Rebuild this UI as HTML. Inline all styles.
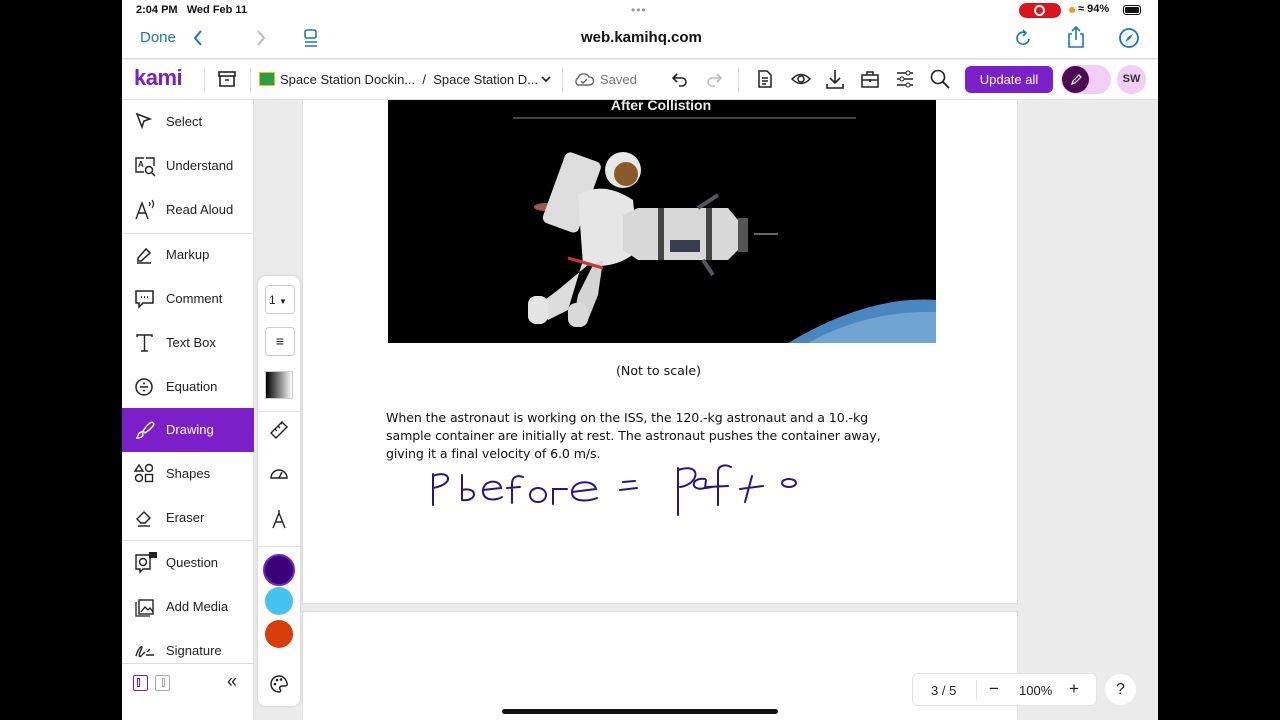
<!DOCTYPE html>
<html><head><meta charset="utf-8"><style>
*{margin:0;padding:0;box-sizing:border-box}
body{width:1280px;height:720px;background:#000;position:relative;overflow:hidden;font-family:"Liberation Sans",sans-serif;color:#222}
.a{position:absolute}
.ipad{left:122px;top:0;width:1036px;height:720px;background:#ebebeb;overflow:hidden}
.side{left:0;top:100px;width:132px;height:620px;background:#fff;border-right:1px solid #ddd}
.it{position:absolute;left:0;width:132px;height:44px;font-size:13px;color:#222}
.it span{position:absolute;left:44px;top:14px}
.it svg{position:absolute;left:12px;top:11px}
.sel{background:#7b1fc9;color:#fff}
.tb{font-size:13px}
</style></head><body>
<div class="a ipad">
 <div class="a" style="left:0;top:0;width:1036px;height:59px;background:#fff;border-bottom:1px solid #ddd"></div>
 <div class="a" style="left:14px;top:4px;font-size:11px;font-weight:bold;color:#111">2:04 PM&nbsp;&nbsp; Wed Feb 11</div>
 <div class="a" style="left:509px;top:3px;font-size:12px;color:#999;letter-spacing:1px">•••</div>
 <div class="a" style="left:897px;top:3px;width:42px;height:15px;border-radius:8px;background:#d9141c"></div>
 <div class="a" style="left:912px;top:5px;width:11px;height:11px;border-radius:50%;border:2px solid #fff"></div>
 <div class="a" style="left:947px;top:7px;width:6px;height:6px;border-radius:50%;background:#f39a1d"></div>
 <div class="a" style="left:956px;top:3px;font-size:11px;font-weight:bold;color:#111">&#8776; 94%</div>
 <div class="a" style="left:1001px;top:5px;width:18px;height:10px;border:1px solid #111;border-radius:3px;padding:1px"><div style="width:100%;height:100%;background:#111;border-radius:1px"></div></div>
 <div class="a" style="left:18px;top:29px;font-size:15px;color:#1a74c9">Done</div>
 <svg class="a" style="left:70px;top:29px" width="12" height="18"><path d="M9 2 L3 9 L9 16" stroke="#1a74c9" stroke-width="2" fill="none"/></svg>
 <svg class="a" style="left:133px;top:29px" width="12" height="18"><path d="M3 2 L9 9 L3 16" stroke="#bbb" stroke-width="2" fill="none"/></svg>
 <svg class="a" style="left:180px;top:28px" width="18" height="20"><rect x="3" y="2" width="11" height="8" rx="2" stroke="#1a74c9" stroke-width="1.6" fill="none"/><path d="M3 14h12M3 18h12" stroke="#1a74c9" stroke-width="1.6"/></svg>
 <div class="a" style="left:459px;top:29px;font-size:15px;font-weight:bold;color:#111">web.kamihq.com</div>
 <svg class="a" style="left:893px;top:28px" width="18" height="20"><path d="M14 11 A6 6 0 1 1 11 5" stroke="#1a74c9" stroke-width="1.6" fill="none"/><path d="M8 2 L11 5 L8 8" stroke="#1a74c9" stroke-width="1.6" fill="none"/></svg>
 <svg class="a" style="left:944px;top:25px" width="20" height="24"><path d="M6 9H3v13h14V9h-3M10 15V2M6 6l4-4 4 4" stroke="#1a74c9" stroke-width="1.6" fill="none"/></svg>
 <svg class="a" style="left:996px;top:27px" width="22" height="22"><circle cx="11" cy="11" r="9" stroke="#1a74c9" stroke-width="1.8" fill="none"/><path d="M15 7 L12 12 L7 15 L10 10Z" fill="#1a74c9"/></svg>
 <div class="a" style="left:0;top:60px;width:1036px;height:40px;background:#fff;border-bottom:1px solid #e2e2e2"></div>
 <div class="a" style="left:12px;top:65px;font-size:22px;font-weight:bold;color:#7b1fc9;letter-spacing:-0.5px">kami</div>
 <div class="a" style="left:82px;top:68px;width:1px;height:24px;background:#ddd"></div>
 <svg class="a" style="left:95px;top:70px" width="20" height="18"><rect x="2" y="2" width="16" height="4" stroke="#222" stroke-width="1.6" fill="none"/><path d="M3 6v10h14V6M8 10h4" stroke="#222" stroke-width="1.6" fill="none"/></svg>
 <div class="a" style="left:128px;top:68px;width:1px;height:24px;background:#ddd"></div>
 <div class="a" style="left:137px;top:72px;width:16px;height:14px;background:#2a9d46;border:1px solid #e6c21d"></div>
 <div class="a tb" style="left:158px;top:72px">Space Station Dockin...&nbsp; /&nbsp; Space Station D...</div>
 <svg class="a" style="left:418px;top:74px" width="12" height="10"><path d="M2 3l4 4 4-4" stroke="#222" stroke-width="1.6" fill="none"/></svg>
 <div class="a" style="left:440px;top:68px;width:1px;height:24px;background:#ddd"></div>
 <svg class="a" style="left:451px;top:70px" width="22" height="18"><path d="M5 15 A4 4 0 0 1 5 8 A6 6 0 0 1 16 7 A4 4 0 0 1 17 15Z" stroke="#666" stroke-width="1.4" fill="none"/><path d="M8 11l2 2 4-4" stroke="#666" stroke-width="1.4" fill="none"/></svg>
 <div class="a tb" style="left:478px;top:72px;color:#777">Saved</div>
 <svg class="a" style="left:548px;top:70px" width="18" height="18"><path d="M4 8h8a4 4 0 0 1 0 8H9M7 4L3 8l4 4" stroke="#222" stroke-width="1.6" fill="none"/></svg>
 <svg class="a" style="left:584px;top:70px" width="18" height="18"><path d="M14 8H6a4 4 0 0 0 0 8h3M11 4l4 4-4 4" stroke="#bbb" stroke-width="1.6" fill="none"/></svg>
 <div class="a" style="left:616px;top:68px;width:1px;height:24px;background:#ddd"></div>
 <svg class="a" style="left:634px;top:69px" width="18" height="20"><path d="M3 2h8l4 4v12H3z M6 9h6M6 12h6M6 15h4" stroke="#222" stroke-width="1.5" fill="none"/></svg>
 <svg class="a" style="left:668px;top:70px" width="22" height="18"><path d="M2 9 Q11 0 20 9 Q11 18 2 9Z" stroke="#222" stroke-width="1.5" fill="none"/><circle cx="11" cy="9" r="3" stroke="#222" stroke-width="1.5" fill="none"/></svg>
 <svg class="a" style="left:703px;top:68px" width="20" height="22"><path d="M10 2v13M5 10l5 5 5-5M2 16v4h16v-4" stroke="#222" stroke-width="1.6" fill="none"/></svg>
 <svg class="a" style="left:738px;top:69px" width="20" height="20"><rect x="2" y="6" width="16" height="12" stroke="#222" stroke-width="1.5" fill="none"/><path d="M7 6V3h6v3M2 11h16M10 10v3" stroke="#222" stroke-width="1.5" fill="none"/></svg>
 <svg class="a" style="left:773px;top:69px" width="20" height="20"><path d="M2 4h16M2 10h16M2 16h16" stroke="#222" stroke-width="1.4"/><circle cx="13" cy="4" r="2" fill="#fff" stroke="#222"/><circle cx="7" cy="10" r="2" fill="#fff" stroke="#222"/><circle cx="13" cy="16" r="2" fill="#fff" stroke="#222"/></svg>
 <svg class="a" style="left:808px;top:69px" width="20" height="20"><circle cx="8" cy="8" r="6.5" stroke="#222" stroke-width="1.6" fill="none"/><path d="M13 13l6 6" stroke="#222" stroke-width="1.8"/></svg>
 <div class="a" style="left:843px;top:66px;width:88px;height:27px;border-radius:6px;background:#7b1fc9;color:#fff;font-size:13px;text-align:center;line-height:27px">Update all</div>
 <div class="a" style="left:939px;top:65px;width:50px;height:29px;border-radius:15px;background:#f2cdf5"></div>
 <div class="a" style="left:940px;top:66px;width:27px;height:27px;border-radius:50%;background:#4d0b52"></div>
 <svg class="a" style="left:947px;top:73px" width="14" height="14"><path d="M3 11l1-3 6-6 2 2-6 6z" stroke="#fff" stroke-width="1.2" fill="none"/></svg>
 <div class="a" style="left:995px;top:65px;width:29px;height:29px;border-radius:50%;background:#f2cdf5;font-size:11px;font-weight:bold;text-align:center;line-height:29px;color:#333">SW</div>

 <div class="a" style="left:180px;top:100px;width:716px;height:504px;background:#fff;border:1px solid #ddd;border-top:none"></div>
 <div class="a" style="left:180px;top:611px;width:716px;height:120px;background:#fff;border:1px solid #ddd"></div>
 <svg class="a" style="left:266px;top:100px" width="548" height="243" viewBox="0 0 548 243">
  <rect width="548" height="243" fill="#000"/>
  <text x="273" y="10" text-anchor="middle" fill="#eee" font-size="14" font-weight="bold" font-family="Liberation Sans">After Collistion</text>
  <line x1="125" y1="18" x2="468" y2="18" stroke="#888"/>
  <path d="M400 243 Q480 195 548 200 L548 243Z" fill="#4a86c0"/>
  <path d="M420 243 Q480 210 548 212 L548 243Z" fill="#8ab9e0" opacity=".6"/>
  <ellipse cx="158" cy="107" rx="12" ry="4" fill="#e07a6a" opacity=".7"/>
  <rect x="165" y="55" width="38" height="75" rx="6" fill="#ddd" transform="rotate(20 184 92)"/>
  <circle cx="235" cy="70" r="18" fill="#e8e8e8"/>
  <circle cx="238" cy="74" r="12" fill="#8a5a28"/>
  <path d="M190 95 Q215 80 245 100 L250 150 Q230 170 195 165Z" fill="#e6e6e6"/>
  <path d="M195 160 L180 210 L160 220 L150 205 L170 190 L200 165Z" fill="#dcdcdc"/>
  <path d="M215 160 L210 195 L200 220 L185 220 L190 195 L205 165Z" fill="#d4d4d4"/>
  <rect x="140" y="196" width="20" height="28" rx="8" fill="#e5e5e5"/>
  <rect x="180" y="203" width="20" height="24" rx="8" fill="#dadada"/>
  <line x1="180" y1="158" x2="215" y2="168" stroke="#c33" stroke-width="3"/>
  <path d="M235 115 L250 108 L340 108 L350 120 L350 150 L340 160 L250 160 L235 150Z" fill="#d8d8d8"/>
  <rect x="270" y="108" width="6" height="52" fill="#444"/><rect x="318" y="108" width="6" height="52" fill="#444"/>
  <rect x="282" y="140" width="30" height="12" fill="#3a3d4d"/>
  <rect x="350" y="118" width="10" height="34" fill="#555"/>
  <line x1="310" y1="108" x2="330" y2="95" stroke="#556" stroke-width="4"/><line x1="315" y1="160" x2="325" y2="175" stroke="#556" stroke-width="4"/>
  <line x1="366" y1="134" x2="390" y2="134" stroke="#ccc"/>
 </svg>
 <div class="a" style="left:494px;top:363px;font-family:'DejaVu Sans',sans-serif;font-size:12.6px;color:#111">(Not to scale)</div>
 <div class="a" style="left:264px;top:409px;width:520px;font-family:'DejaVu Sans',sans-serif;font-size:12.6px;line-height:18px;color:#111;letter-spacing:-0.1px">When the astronaut is working on the ISS, the 120.-kg astronaut and a 10.-kg sample container are initially at rest. The astronaut pushes the container away, giving it a final velocity of 6.0 m/s.</div>
 <svg class="a" style="left:-122px;top:0" width="1280" height="720"><g stroke="#2a1480" stroke-width="2" fill="none" stroke-linecap="round">
  <path d="M433 505 L433 474 M433 476 C450 469 456 484 433 488"/>
  <path d="M462 475 L462 500 M462 490 C478 486 478 502 462 500"/>
  <path d="M483 490 L501 488 C500 478 482 480 483 492 C484 502 498 500 502 497"/>
  <path d="M512 503 L512 484 C512 476 518 475 523 477 M507 488 L520 487"/>
  <ellipse cx="538" cy="495" rx="8" ry="7"/>
  <path d="M553 504 L553 489 L567 489"/>
  <path d="M572 492 L596 489 C594 479 571 480 572 493 C573 503 590 501 597 498"/>
  <path d="M620 490 L637 488 M623 482 L635 481"/>
  <path d="M678 515 L678 468 M678 470 C702 462 700 484 680 487"/>
  <path d="M705 479 C690 477 690 492 705 488 L706 480 M706 488 L712 487"/>
  <path d="M718 505 L718 472 C718 465 726 464 731 467 M707 487 L728 486"/>
  <path d="M752 476 L745 502 M740 489 L763 486"/>
  <ellipse cx="789" cy="483" rx="7" ry="4"/>
 </g></svg>
 <div class="a" style="left:790px;top:673px;width:185px;height:33px;background:#fff;border-radius:6px;border:1px solid #e4e4e4;font-size:13px;color:#222">
  <span class="a" style="left:18px;top:9px">3 / 5</span>
  <div class="a" style="left:63px;top:6px;width:1px;height:20px;background:#e0e0e0"></div>
  <span class="a" style="left:76px;top:5px;font-size:17px">&minus;</span>
  <span class="a" style="left:106px;top:9px">100%</span>
  <span class="a" style="left:156px;top:5px;font-size:17px">+</span>
 </div>
 <div class="a" style="left:983px;top:674px;width:31px;height:31px;border-radius:50%;background:#fff;text-align:center;line-height:31px;font-size:16px">?</div>

 <div class="a side">
  <div class="it" style="top:0"><svg width="20" height="20"><path d="M3 3l13 5-6 2-2 6z" stroke="#222" stroke-width="1.5" fill="none"/></svg><span>Select</span></div>
  <div class="it" style="top:44px"><svg width="22" height="22"><path d="M10 3H2v14h8M12 3h8v8" stroke="#222" stroke-width="1.4" fill="none"/><text x="4" y="12" font-size="8" font-weight="bold" fill="#222">A</text><circle cx="15" cy="15" r="3.5" stroke="#222" stroke-width="1.5" fill="none"/><path d="M18 18l3 3" stroke="#222" stroke-width="1.5"/></svg><span>Understand</span></div>
  <div class="it" style="top:88px"><svg width="22" height="22"><path d="M2 20L8 4L14 20M4.5 14h7" stroke="#222" stroke-width="1.4" fill="none"/><path d="M15 3q2 2 0 4M18 1q3 4 0 8" stroke="#222" stroke-width="1.2" fill="none"/></svg><span>Read Aloud</span></div>
  <div style="position:absolute;left:0;top:133px;width:132px;height:1px;background:#e2e2e2"></div>
  <div class="it" style="top:133px"><svg width="22" height="22"><path d="M4 14l8-9 4 4-9 8H4z" stroke="#222" stroke-width="1.5" fill="none"/><path d="M3 19h14" stroke="#222" stroke-width="1.5"/></svg><span>Markup</span></div>
  <div class="it" style="top:177px"><svg width="22" height="22"><path d="M2 3h17v12H9l-4 4v-4H2z" stroke="#222" stroke-width="1.5" fill="none"/><path d="M7 9h1M10 9h1M13 9h1" stroke="#222" stroke-width="1.8"/></svg><span>Comment</span></div>
  <div class="it" style="top:221px"><svg width="22" height="22"><path d="M3 5V3h15v2M10.5 3v16M7 19h7" stroke="#222" stroke-width="1.4" fill="none"/></svg><span>Text Box</span></div>
  <div class="it" style="top:265px"><svg width="22" height="22"><circle cx="10" cy="11" r="8" stroke="#222" stroke-width="1.5" fill="none"/><path d="M6 11h8" stroke="#222" stroke-width="1.5"/><circle cx="10" cy="7.5" r="1" fill="#222"/><circle cx="10" cy="14.5" r="1" fill="#222"/></svg><span>Equation</span></div>
  <div class="it sel" style="top:308px"><svg width="22" height="22"><path d="M18 3c-3 1-7 6-9 9l2 2c3-2 8-6 9-9zM8 13c-3 0-4 3-5 6 3 0 6-1 6-4z" stroke="#fff" stroke-width="1.4" fill="none"/></svg><span>Drawing</span></div>
  <div class="it" style="top:352px"><svg width="22" height="22"><path d="M5 2l4 6H1z" stroke="#222" stroke-width="1.4" fill="none"/><circle cx="15" cy="5" r="3.5" stroke="#222" stroke-width="1.4" fill="none"/><circle cx="5" cy="15" r="3.5" stroke="#222" stroke-width="1.4" fill="none"/><rect x="11.5" y="11.5" width="7" height="7" stroke="#222" stroke-width="1.4" fill="none"/></svg><span>Shapes</span></div>
  <div class="it" style="top:396px"><svg width="22" height="22"><path d="M3 12l7-7 6 6-5 5H7z" stroke="#222" stroke-width="1.4" fill="none"/><path d="M4 19h12" stroke="#222" stroke-width="1.4"/></svg><span>Eraser</span></div>
  <div style="position:absolute;left:0;top:440px;width:132px;height:1px;background:#e2e2e2"></div>
  <div class="it" style="top:441px"><svg width="24" height="24"><path d="M2 3h14v14H9l-3 3v-3H2z" stroke="#222" stroke-width="1.4" fill="none"/><circle cx="9" cy="10" r="3.5" stroke="#222" stroke-width="1.4" fill="none"/><rect x="15" y="0" width="8" height="6" fill="#222"/></svg><span>Question</span></div>
  <div class="it" style="top:485px"><svg width="22" height="22"><rect x="5" y="4" width="14" height="14" stroke="#222" stroke-width="1.4" fill="none"/><path d="M2 6v14h14M7 16l4-5 3 3 2-2 3 4" stroke="#222" stroke-width="1.3" fill="none"/></svg><span>Add Media</span></div>
  <div class="it" style="top:529px"><svg width="22" height="22"><path d="M2 16c3-10 8-12 5-6-3 6-2 9 2 4l2-2M12 15h8M13 12l3-3" stroke="#222" stroke-width="1.4" fill="none"/></svg><span>Signature</span></div>
  <div style="position:absolute;left:0;top:563px;width:132px;height:1px;background:#ddd"></div>
  <div style="position:absolute;left:11px;top:575px;width:15px;height:16px;border:1.5px solid #7b1fc9;border-radius:2px"><div style="position:absolute;left:3px;top:2px;width:3px;height:9px;border:1px solid #7b1fc9"></div></div>
  <div style="position:absolute;left:33px;top:575px;width:15px;height:16px;border:1.5px solid #aaa;border-radius:2px"><div style="position:absolute;left:6px;top:2px;width:3px;height:9px;border:1px solid #aaa"></div></div>
  <div style="position:absolute;left:105px;top:571px;font-size:18px;color:#222">&laquo;</div>
 </div>
 <div class="a" style="left:136px;top:276px;width:42px;height:430px;background:#fff;border-radius:8px;box-shadow:0 0 3px rgba(0,0,0,.15)">
  <div class="a" style="left:7px;top:9px;width:30px;height:29px;border:1px solid #ccc;border-radius:4px;font-size:12px;padding:7px 0 0 3px">1 <span style="font-size:8px">&#9660;</span></div>
  <div class="a" style="left:7px;top:51px;width:30px;height:29px;border:1px solid #ccc;border-radius:4px;text-align:center;line-height:27px;font-size:14px">&#8801;</div>
  <div class="a" style="left:7px;top:95px;width:28px;height:28px;border:1px solid #ccc;background:linear-gradient(90deg,#000,#fff)"></div>
  <div class="a" style="left:0;top:135px;width:42px;height:1px;background:#e6e6e6"></div>
  <svg class="a" style="left:11px;top:144px" width="20" height="20"><path d="M2 13l11-11 5 5-11 11z M6 9l2 2M9 6l2 2M12 3l1 1" stroke="#222" stroke-width="1.4" fill="none"/></svg>
  <svg class="a" style="left:11px;top:190px" width="20" height="14"><path d="M2 12a8 8 0 0 1 16 0z M10 12l3-6" stroke="#222" stroke-width="1.4" fill="none"/></svg>
  <svg class="a" style="left:12px;top:232px" width="18" height="22"><path d="M9 2v3M3 20L9 5l6 15M5 14h8" stroke="#222" stroke-width="1.4" fill="none"/></svg>
  <div class="a" style="left:0;top:270px;width:42px;height:1px;background:#e6e6e6"></div>
  <div class="a" style="left:5px;top:278px;width:32px;height:32px;border-radius:50%;background:#3a0078;border:2px solid #7b1fc9"></div>
  <div class="a" style="left:7px;top:311px;width:28px;height:28px;border-radius:50%;background:#45c2ee"></div>
  <div class="a" style="left:7px;top:344px;width:28px;height:28px;border-radius:50%;background:#d93d0a"></div>
  <svg class="a" style="left:11px;top:398px" width="20" height="20"><path d="M10 2a8 8 0 0 0 0 16c2 0 2-2 1-3s0-3 2-3h3a2 2 0 0 0 2-3c-1-4-4-7-8-7z" stroke="#222" stroke-width="1.5" fill="none"/><circle cx="6" cy="10" r="1.3" fill="#222"/><circle cx="8" cy="6" r="1.3" fill="#222"/><circle cx="12" cy="5.5" r="1.3" fill="#222"/></svg>
 </div>
 <div class="a" style="left:380px;top:709px;width:276px;height:5px;border-radius:3px;background:#111"></div>
</div>
</body></html>
